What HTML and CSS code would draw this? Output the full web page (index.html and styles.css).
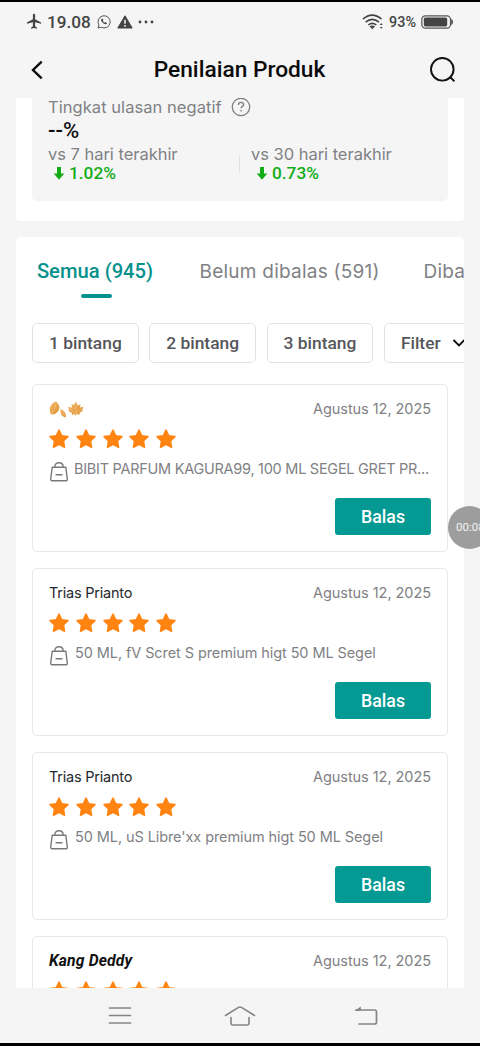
FILE: index.html
```html
<!DOCTYPE html>
<html lang="id">
<head>
<meta charset="utf-8">
<title>Penilaian Produk</title>
<link rel="stylesheet" href="styles.css">
</head>
<body>
<svg class="defs" width="0" height="0">
  <symbol id="star" viewBox="0 0 22 22"><path d="M11 2.200l2.700 5.600 6.200.8-4.500 4.300 1.100 6.300-5.500-2.900-5.500 2.900 1.100-6.300L2.100 8.600l6.200-.8z" fill="#ff8412" stroke="#ff8412" stroke-width="1.600" stroke-linejoin="round"/></symbol>
  <symbol id="bag" viewBox="0 0 20 20"><g fill="none" stroke="#77797d" stroke-width="1.4" stroke-linecap="round" stroke-linejoin="round"><path d="M3.200 5.200h13.600l1.500 12.200q.1 1.300-1.200 1.300H2.900q-1.300 0-1.200-1.300z"/><path d="M5.800 5C5.800 2.200 7.500.8 10 .8s4.200 1.400 4.200 4.200M7 12.800h6"/></g></symbol>
</svg>
<div class="screen">
  <div class="status">
    <svg class="plane" width="16" height="17" viewBox="0 0 16 17"><path d="M8 .8c.8 0 1.100.6 1.100 1.400v4l6 3.300v1.300L9.100 9.300v3.900l1.900 1.500v1L8 15 5 15.700v-1l1.900-1.500V9.300L.9 10.800V9.500l6-3.300v-4C6.900 1.400 7.200.8 8 .8z" fill="#444"/></svg>
    <span class="clock">19.08</span>
    <svg class="chat" width="14" height="14" viewBox="0 0 14 14"><path d="M1 13l.9-3A6.100 6.100 0 1 1 4.200 12.200z" fill="none" stroke="#555" stroke-width="1"/><path d="M4.700 3.700c-1 .7-.7 2.300.8 3.900s3.300 2.200 4.200 1.200l.2-.8-1.500-.9-.8.7C6.700 7.400 6.100 6.800 5.800 6l.6-.7-.7-1.600z" fill="#444"/></svg>
    <svg class="warn" width="16" height="14" viewBox="0 0 16 14"><path d="M8 .8L15.200 13H.8z" fill="#444" stroke="#444" stroke-linejoin="round"/><path d="M8 4.800v4M8 10v1.700" stroke="#f5f5f5" stroke-width="1.500"/></svg>
    <svg class="dots" width="16" height="4" viewBox="0 0 16 4"><g fill="#444"><circle cx="2" cy="2" r="1.400"/><circle cx="8" cy="2" r="1.400"/><circle cx="14" cy="2" r="1.400"/></g></svg>
    <svg class="wifi" width="22" height="16" viewBox="0 0 22 16"><g fill="none" stroke="#444" stroke-width="1.600"><path d="M1 5.200q9-8 18.500 0M3.600 8.200q6.700-5.600 13.400 0M6.300 11q4-3.200 8 0"/></g><path d="M7.500 12.300q2.800-1.800 5.600 0L10.300 15.300z" fill="#444"/><path d="M19.200 9l1.500 1.900h-3zM19.200 14.800l1.500-1.900h-3z" fill="#444"/></svg>
    <span class="battery-label">93%</span>
    <svg width="33" height="14" viewBox="0 0 33 14"><rect x=".8" y=".8" width="28.700" height="12.400" rx="3.600" fill="none" stroke="#555" stroke-width="1.200"/><rect x="2.800" y="2.600" width="23.400" height="8.800" rx="1.600" fill="#444"/><path d="M30.200 3.800q1.900.7 1.900 3.200t-1.900 3.200z" fill="#555"/></svg>
  </div>
  <header class="header">
    <svg width="14" height="20" viewBox="0 0 14 20"><path d="M11.700 1.600L3 10l8.700 8.400" fill="none" stroke="#0b0b0b" stroke-width="2.400"/></svg>
    <h1>Penilaian Produk</h1>
    <svg width="27" height="27" viewBox="0 0 27 27"><circle cx="13.300" cy="13.300" r="11.300" fill="none" stroke="#111" stroke-width="1.900"/><path d="M21 21l4.400 4.200" stroke="#111" stroke-width="1.900"/></svg>
  </header>
  <main class="content">
    <section class="summary">
      <div class="metric">
        <div class="metric-title"><span class="label title-label">Tingkat ulasan negatif</span>
          <svg width="20" height="20" viewBox="0 0 20 20"><circle cx="10" cy="10" r="8.700" fill="none" stroke="#808184" stroke-width="1.300"/><path d="M7.400 8q0-2.600 2.600-2.600T12.600 7.700c0 1.700-2.500 1.700-2.500 3.600M10.100 12.900v1.700" fill="none" stroke="#808184" stroke-width="1.400"/></svg>
        </div>
        <div class="value">--%</div>
        <div class="compare">
          <div class="period"><span class="label">vs 7 hari terakhir</span>
            <div class="delta"><svg width="12" height="15" viewBox="0 0 12 15"><path d="M4 1h4v6.500h3.300L6 13.700.7 7.500H4z" fill="#12ad16"/></svg>1.02%</div></div>
          <i class="rule"></i>
          <div class="period"><span class="label">vs 30 hari terakhir</span>
            <div class="delta"><svg width="12" height="15" viewBox="0 0 12 15"><path d="M4 1h4v6.500h3.300L6 13.700.7 7.500H4z" fill="#12ad16"/></svg>0.73%</div></div>
        </div>
      </div>
    </section>
    <section class="reviews">
      <nav class="tabs"><span class="tab active">Semua (945)</span><span class="tab pending">Belum dibalas (591)</span><span class="tab replied">Dibalas</span></nav>
      <div class="chips"><span class="chip">1 bintang</span><span class="chip">2 bintang</span><span class="chip">3 bintang</span><span class="chip filter">Filter<svg width="14" height="10" viewBox="0 0 14 10"><path d="M1.500 2L7 7.500 12.500 2" fill="none" stroke="#111" stroke-width="1.900"/></svg></span></div>
      <div class="list">
        <article class="card">
          <div class="top"><span class="name"><svg width="35" height="17" viewBox="0 0 35 17"><defs><linearGradient id="leaf" x1="0" y1="0" x2="1" y2="1"><stop offset="0" stop-color="#f3b968"/><stop offset="1" stop-color="#df8f35"/></linearGradient></defs><path d="M7 .5C10.500 3.500 11.500 7 9 10.500Q6 14 2 13.300C-.5 9 .5 3 7 .5z" fill="url(#leaf)"/><path d="M7 3Q6 9 2.500 12.500" fill="none" stroke="#f7cb80" stroke-width=".6"/><path d="M11.300 8Q17.500 10 16.800 16.500 10.500 15.500 11.300 8z" fill="url(#leaf)"/><path d="M12.500 10l3.500 5" stroke="#f7cb80" stroke-width=".5"/><path d="M27 .5l1.700 4 2.800-1.200-.5 3.200 3.600-.8-1.300 2.600.8.900-3.600 3 .2 1.600-3.300-.8-.6 2-1-1.900-3 .8.200-1.600L19.200 9.800l.9-1.400-1.100-2.500 4 .5-.5-3.300 2.500.9z" fill="url(#leaf)"/><path d="M27 4v9M21 8l6 4 6-4" fill="none" stroke="#f7cb80" stroke-width=".5"/></svg></span><time>Agustus 12, 2025</time></div>
          <div class="stars"><svg><use href="#star"/></svg><svg><use href="#star"/></svg><svg><use href="#star"/></svg><svg><use href="#star"/></svg><svg><use href="#star"/></svg></div>
          <div class="product"><svg><use href="#bag"/></svg><span class="caps">BIBIT PARFUM KAGURA99, 100 ML SEGEL GRET PR...</span></div>
          <button class="reply">Balas</button>
        </article>
        <article class="card">
          <div class="top"><span class="name">Trias Prianto</span><time>Agustus 12, 2025</time></div>
          <div class="stars"><svg><use href="#star"/></svg><svg><use href="#star"/></svg><svg><use href="#star"/></svg><svg><use href="#star"/></svg><svg><use href="#star"/></svg></div>
          <div class="product"><svg><use href="#bag"/></svg><span>50 ML, fV Scret S premium higt 50 ML Segel</span></div>
          <button class="reply">Balas</button>
        </article>
        <article class="card">
          <div class="top"><span class="name">Trias Prianto</span><time>Agustus 12, 2025</time></div>
          <div class="stars"><svg><use href="#star"/></svg><svg><use href="#star"/></svg><svg><use href="#star"/></svg><svg><use href="#star"/></svg><svg><use href="#star"/></svg></div>
          <div class="product"><svg><use href="#bag"/></svg><span>50 ML, uS Libre'xx premium higt 50 ML Segel</span></div>
          <button class="reply">Balas</button>
        </article>
        <article class="card">
          <div class="top"><span class="name slanted">Kang Deddy</span><time>Agustus 12, 2025</time></div>
          <div class="stars"><svg><use href="#star"/></svg><svg><use href="#star"/></svg><svg><use href="#star"/></svg><svg><use href="#star"/></svg><svg><use href="#star"/></svg></div>
        </article>
      </div>
    </section>
  </main>
  <footer class="navbar">
    <svg width="24" height="20" viewBox="0 0 24 20"><path d="M1.500 2h21M1.500 9.500h21M1.500 17h21" stroke="#858585" stroke-width="1.700" stroke-linecap="round"/></svg>
    <svg width="32" height="22" viewBox="0 0 32 22"><path d="M1.500 10.500L14.500 2.400q1.500-.9 3 0L30.500 10.500M7 12.500v5.500q0 2 2 2h14q2 0 2-2v-5.500" fill="none" stroke="#858585" stroke-width="1.600" stroke-linecap="round"/></svg>
    <svg width="24" height="20" viewBox="0 0 24 20"><path d="M2 4h18.500q2 0 2 2v10q0 2-2 2H5" fill="none" stroke="#858585" stroke-width="1.700" stroke-linecap="round"/><path d="M.8 4.800L6.800.6v4.200z" fill="#858585"/></svg>
  </footer>
  <div class="timer">00:08</div>
</div>
</body>
</html>
```
FILE: styles.css
```css
* { box-sizing: border-box; }
body { margin: 0; background: #f5f5f5; font-family: Roboto, sans-serif; }
.defs { position: absolute; }
.screen { position: relative; display: flex; flex-direction: column; width: 480px; height: 1046px; overflow: hidden; border-top: 2px solid #000; border-bottom: 3px solid #000; background: #f5f5f6; }
svg { display: block; flex: none; }
span, time { white-space: nowrap; }

.status { display: flex; align-items: center; height: 39px; padding: 0 26px; color: #444; font-weight: 500; }
.clock { margin: 0 6px 0 5px; font-size: 17.200px; }
.warn { margin: 0 5px 0 6px; }
.wifi { margin-left: auto; }
.battery-label { margin: 0 5px; padding-top: 1px; font-size: 14.400px; }

.header { display: flex; align-items: center; justify-content: space-between; height: 57px; padding: 0 24px 0 30px; }
.header h1 { margin: 0; padding-left: 6px; font-size: 22.700px; font-weight: 500; color: #0b0b0b; white-space: nowrap; }

.content { height: 890px; padding: 0 16px; overflow: hidden; }
.summary { height: 123px; padding: 0 16px; background: #fff; border-radius: 0 0 4px 4px; }
.metric { height: 103px; padding: 0 16px; background: #f5f5f6; border-radius: 0 0 5px 5px; }
.label { font: 400 16.500px/20px Inter, sans-serif; letter-spacing: 0; color: #808184; }
.title-label { letter-spacing: .05px; }
.metric-title { display: flex; align-items: center; gap: 9px; height: 18px; }
.value { height: 28px; font-size: 22px; line-height: 30px; font-weight: 500; color: #111; }
.compare { display: flex; align-items: flex-start; }
.period { width: 191px; }
.period .label { display: block; height: 20px; letter-spacing: -.03px; }
.delta { display: flex; align-items: center; gap: 4px; height: 18px; padding-left: 5px; font-size: 17.300px; font-weight: 500; color: #12ad16; }
.rule { width: 1px; height: 16px; margin: 12px 11px 0 0; background: #dfe0e2; }
.period + .rule + .period { width: auto; }

.reviews { height: 770px; margin-top: 16px; background: #fff; border-radius: 5px 5px 0 0; overflow: hidden; }
.tabs { display: flex; height: 86px; padding: 20px 0 0 21px; }
.tab { flex: none; height: 42px; padding-top: 1px; font: 400 19px/28px Inter, sans-serif; letter-spacing: .24px; color: #808184; }
.active { display: flex; flex-direction: column; align-items: center; width: 120px; margin-left: -2px; padding-top: 0; font: 500 20.200px/28px Roboto, sans-serif; letter-spacing: 0; color: #07918c; }
.active::after { content: ""; width: 31px; height: 4px; margin: 9px 0 0 2px; border-radius: 2px; background: #07918c; }
.pending { margin-left: 44.500px; width: 224px; }
.chips { display: flex; gap: 10.500px; height: 61px; padding-left: 16px; }
.chip { display: flex; flex: none; align-items: center; justify-content: center; width: 106.800px; height: 40px; border: 1px solid #e2e3e6; border-radius: 5px; font-size: 17.400px; font-weight: 500; color: #55565a; }
.filter { justify-content: flex-start; gap: 11px; padding-left: 16px; }

.list { display: flex; flex-direction: column; gap: 16px; padding: 0 16px; }
.card { display: flex; flex: none; flex-direction: column; height: 168px; padding: 14px 16px; border: 1px solid #e8e8eb; border-radius: 5px; }
.top { display: flex; justify-content: space-between; align-items: center; height: 20px; font: 400 14.500px/20px Inter, sans-serif; }
.name { letter-spacing: -.22px; color: #26272b; }
.name.slanted { font: italic 700 15.700px/20px Roboto, sans-serif; letter-spacing: .15px; color: #111; }
.top time { letter-spacing: -.05px; color: #808184; }
.stars { display: flex; gap: 4.700px; height: 22px; margin: 9px 0 0 -.800px; }
.stars svg { width: 22px; height: 22px; }
.product { display: flex; align-items: center; gap: 6px; height: 20px; margin-top: 9px; font: 400 14.500px/20px Inter, sans-serif; letter-spacing: -.09px; color: #808184; }
.product svg { width: 20px; height: 20px; margin-top: 5px; }
.caps { margin-left: -1px; letter-spacing: -.27px; }
.reply { align-self: flex-end; width: 96px; height: 37px; margin-top: 19px; padding: 0; border: 0; border-radius: 3px; background: #049992; color: #fff; font: 500 17.800px/37px Roboto, sans-serif; }

.navbar { display: flex; align-items: center; height: 55px; padding-left: 108px; background: #f5f5f6; }
.navbar svg:nth-child(2) { margin-left: 92px; }
.navbar svg:nth-child(3) { margin-left: 98px; }
.timer { position: absolute; left: 448px; top: 504px; width: 43px; height: 43px; padding-left: 8px; border-radius: 50%; background: #9d9d9d; color: #f4f4f4; font-size: 11.500px; line-height: 43px; }
```
